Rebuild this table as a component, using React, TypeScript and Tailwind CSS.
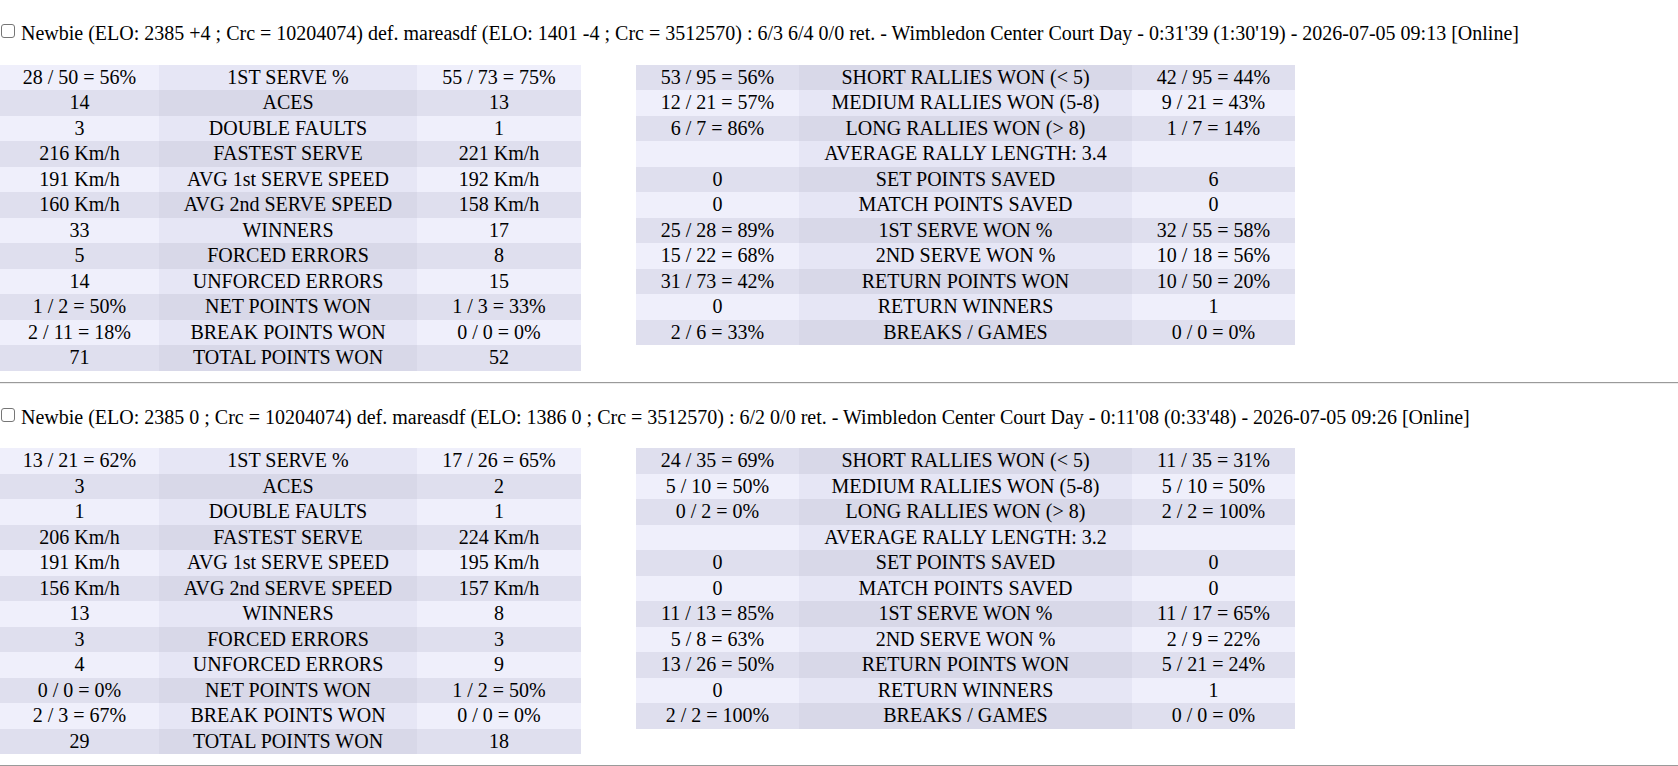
import React from "react";

type Row = [string, string, string];

type Match = {
  title: string;
  left: Row[];
  right: Row[];
};

const matches: Match[] = [
  {
    title:
      "Newbie (ELO: 2385 +4 ; Crc = 10204074) def. mareasdf (ELO: 1401 -4 ; Crc = 3512570) : 6/3 6/4 0/0 ret. - Wimbledon Center Court Day - 0:31'39 (1:30'19) - 2026-07-05 09:13 [Online]",
    left: [
      ["28 / 50 = 56%", "1ST SERVE %", "55 / 73 = 75%"],
      ["14", "ACES", "13"],
      ["3", "DOUBLE FAULTS", "1"],
      ["216 Km/h", "FASTEST SERVE", "221 Km/h"],
      ["191 Km/h", "AVG 1st SERVE SPEED", "192 Km/h"],
      ["160 Km/h", "AVG 2nd SERVE SPEED", "158 Km/h"],
      ["33", "WINNERS", "17"],
      ["5", "FORCED ERRORS", "8"],
      ["14", "UNFORCED ERRORS", "15"],
      ["1 / 2 = 50%", "NET POINTS WON", "1 / 3 = 33%"],
      ["2 / 11 = 18%", "BREAK POINTS WON", "0 / 0 = 0%"],
      ["71", "TOTAL POINTS WON", "52"],
    ],
    right: [
      ["53 / 95 = 56%", "SHORT RALLIES WON (< 5)", "42 / 95 = 44%"],
      ["12 / 21 = 57%", "MEDIUM RALLIES WON (5-8)", "9 / 21 = 43%"],
      ["6 / 7 = 86%", "LONG RALLIES WON (> 8)", "1 / 7 = 14%"],
      ["", "AVERAGE RALLY LENGTH: 3.4", ""],
      ["0", "SET POINTS SAVED", "6"],
      ["0", "MATCH POINTS SAVED", "0"],
      ["25 / 28 = 89%", "1ST SERVE WON %", "32 / 55 = 58%"],
      ["15 / 22 = 68%", "2ND SERVE WON %", "10 / 18 = 56%"],
      ["31 / 73 = 42%", "RETURN POINTS WON", "10 / 50 = 20%"],
      ["0", "RETURN WINNERS", "1"],
      ["2 / 6 = 33%", "BREAKS / GAMES", "0 / 0 = 0%"],
    ],
  },
  {
    title:
      "Newbie (ELO: 2385 0 ; Crc = 10204074) def. mareasdf (ELO: 1386 0 ; Crc = 3512570) : 6/2 0/0 ret. - Wimbledon Center Court Day - 0:11'08 (0:33'48) - 2026-07-05 09:26 [Online]",
    left: [
      ["13 / 21 = 62%", "1ST SERVE %", "17 / 26 = 65%"],
      ["3", "ACES", "2"],
      ["1", "DOUBLE FAULTS", "1"],
      ["206 Km/h", "FASTEST SERVE", "224 Km/h"],
      ["191 Km/h", "AVG 1st SERVE SPEED", "195 Km/h"],
      ["156 Km/h", "AVG 2nd SERVE SPEED", "157 Km/h"],
      ["13", "WINNERS", "8"],
      ["3", "FORCED ERRORS", "3"],
      ["4", "UNFORCED ERRORS", "9"],
      ["0 / 0 = 0%", "NET POINTS WON", "1 / 2 = 50%"],
      ["2 / 3 = 67%", "BREAK POINTS WON", "0 / 0 = 0%"],
      ["29", "TOTAL POINTS WON", "18"],
    ],
    right: [
      ["24 / 35 = 69%", "SHORT RALLIES WON (< 5)", "11 / 35 = 31%"],
      ["5 / 10 = 50%", "MEDIUM RALLIES WON (5-8)", "5 / 10 = 50%"],
      ["0 / 2 = 0%", "LONG RALLIES WON (> 8)", "2 / 2 = 100%"],
      ["", "AVERAGE RALLY LENGTH: 3.2", ""],
      ["0", "SET POINTS SAVED", "0"],
      ["0", "MATCH POINTS SAVED", "0"],
      ["11 / 13 = 85%", "1ST SERVE WON %", "11 / 17 = 65%"],
      ["5 / 8 = 63%", "2ND SERVE WON %", "2 / 9 = 22%"],
      ["13 / 26 = 50%", "RETURN POINTS WON", "5 / 21 = 24%"],
      ["0", "RETURN WINNERS", "1"],
      ["2 / 2 = 100%", "BREAKS / GAMES", "0 / 0 = 0%"],
    ],
  },
];

const StatsTable = ({
  rows,
  widths,
  darkFirst,
}: {
  rows: Row[];
  widths: [string, string, string];
  darkFirst?: boolean;
}) => {
  return (
    <table className="table-fixed border-collapse">
      <colgroup>
        <col className={widths[0]} />
        <col className={widths[1]} />
        <col className={widths[2]} />
      </colgroup>
      <tbody>
        {rows.map((row, i) => {
          const dark = darkFirst ? i % 2 === 0 : i % 2 === 1;
          const side = dark ? "bg-[#dfdfee]" : "bg-[#efeffb]";
          const mid = dark ? "bg-[#d8d8e8]" : "bg-[#e6e6f5]";
          return (
            <tr key={i}>
              <td className={`${side} h-[25.5px] p-0 text-center leading-[23px]`}>{row[0]}</td>
              <td className={`${mid} h-[25.5px] p-0 text-center leading-[23px]`}>{row[1]}</td>
              <td className={`${side} h-[25.5px] p-0 text-center leading-[23px]`}>{row[2]}</td>
            </tr>
          );
        })}
      </tbody>
    </table>
  );
};

const MatchBlock = ({ match }: { match: Match }) => {
  return (
    <div>
      <div className="mt-[22px] flex h-[23px] items-start whitespace-nowrap leading-[23px]">
        <span className="ml-[1px] mr-[6px] mt-[2px] inline-block h-[14px] w-[14px] shrink-0 rounded-[3px] border border-[#767676] bg-white" />
        <span>{match.title}</span>
      </div>
      <div className="mt-[19.5px] flex items-start gap-[55px]">
        <StatsTable rows={match.left} widths={["w-[159px]", "w-[258px]", "w-[164px]"]} />
        <StatsTable
          rows={match.right}
          widths={["w-[163px]", "w-[333px]", "w-[163px]"]}
          darkFirst
        />
      </div>
      <div className="mt-[11px] h-[2px] border-t border-b border-t-[#9a9a9a] border-b-[#ececec]" />
    </div>
  );
};

export default function App() {
  return (
    <div className="min-h-screen bg-white font-['Liberation_Serif','Times_New_Roman',serif] text-[20px] text-black">
      {matches.map((m, i) => (
        <MatchBlock key={i} match={m} />
      ))}
    </div>
  );
}
